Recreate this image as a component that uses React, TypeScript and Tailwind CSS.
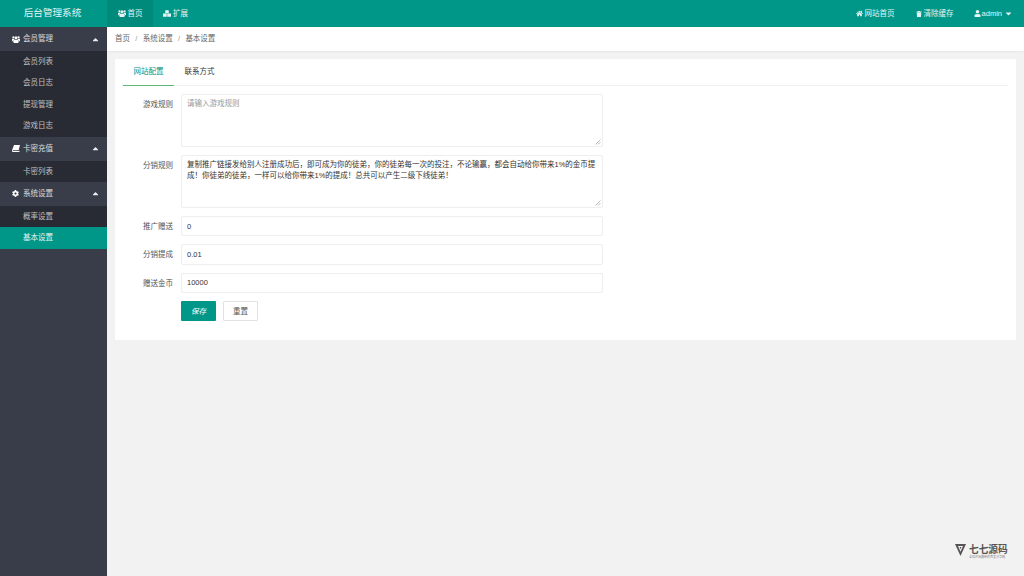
import { FaCaretDown, FaCaretUp, FaCog, FaHome, FaTrash, FaUser } from "react-icons/fa";
import type { ReactNode } from "react";

const FONT = "font-['Liberation_Sans','Noto_Sans_CJK_SC',sans-serif]";

// old font-awesome style glyphs, the v5 ones in react-icons are too different here
function UsersIcon() {
  return (
    <svg viewBox="0 0 16 14" className="h-[7px] w-[8px] fill-current">
      <circle cx="8" cy="3.6" r="3" />
      <circle cx="2.8" cy="2.6" r="2.2" />
      <circle cx="13.2" cy="2.6" r="2.2" />
      <path d="M0 5.5h3.5c.4 1.2 1 2 2 2.6H3c-1 .3-1.6 1-1.7 2.4H0zM16 5.5h-3.5c-.4 1.2-1 2-2 2.6H13c1 .3 1.6 1 1.7 2.4H16z" />
      <path d="M4 7.6h8c1.1.4 1.6 1.6 1.6 3.4 0 1.8-1.1 3-2.6 3H5c-1.5 0-2.6-1.2-2.6-3 0-1.8.5-3 1.6-3.4z" />
    </svg>
  );
}

function BlocksIcon() {
  return (
    <svg viewBox="0 0 16 13" className="h-[7px] w-[8px] fill-current">
      <path d="M4.5 0h7v6h-7z" />
      <path d="M0 6.5h7.5V13H0zM8.5 6.5H16V13H8.5z" />
    </svg>
  );
}

function BookIcon() {
  return (
    <svg viewBox="0 0 14 12" className="h-[7px] w-[8px] fill-current">
      <path d="M3.5 0H14l-2.4 9H1.8c-.5 0-.7.5-.5.8.1.3.4.5.8.5h10.6l.6-.9v1.2l-.6 1.4H2C.7 12 0 11 0 9.8c0-.4.1-.8.2-1.1z" />
    </svg>
  );
}

const menu = [
  { title: "会员管理", icon: <UsersIcon />, items: ["会员列表", "会员日志", "提现管理", "游戏日志"] },
  { title: "卡密充值", icon: <BookIcon />, items: ["卡密列表"] },
  { title: "系统设置", icon: <FaCog className="h-[7px] w-[7px]" />, items: ["概率设置", "基本设置"] },
];

const rules =
  "复制推广链接发给别人注册成功后，即可成为你的徒弟，你的徒弟每一次的投注，不论输赢，都会自动给你带来1%的金币提成！你徒弟的徒弟，一样可以给你带来1%的提成！总共可以产生二级下线徒弟！";

function NavLink({ icon, children }: { icon: ReactNode; children: ReactNode }) {
  return (
    <span className="flex items-center gap-[2px] text-[7.5px] text-white/90">
      {icon}
      {children}
    </span>
  );
}

function AreaRow({ label, value, placeholder }: { label: string; value?: string; placeholder?: string }) {
  return (
    <div className="flex">
      <label className="w-[58px] shrink-0 pt-[4px] pr-[8px] text-right text-[7.5px] leading-[14px] text-[#555]">{label}</label>
      <div className="relative h-[53px] w-[422px]">
        <textarea
          readOnly
          value={value}
          placeholder={placeholder}
          className="block h-full w-full resize-none rounded-[2px] border border-[#eeeeee] bg-white px-[5px] py-[3px] text-[7.5px] leading-[11px] text-[#333] outline-none placeholder:text-[#999]"
        />
        <svg width="6" height="6" viewBox="0 0 6 6" className="absolute bottom-[2px] right-[2px] stroke-[#aaa]">
          <path d="M0.5 5.5L5.5 0.5M3 5.5L5.5 3" fill="none" strokeWidth="0.8" />
        </svg>
      </div>
    </div>
  );
}

function TextRow({ label, value }: { label: string; value: string }) {
  return (
    <div className="flex items-center">
      <label className="w-[58px] shrink-0 pt-[1px] pr-[8px] text-right text-[7.5px] text-[#555]">{label}</label>
      <input
        readOnly
        value={value}
        className="h-[20.3px] w-[422px] rounded-[2px] border border-[#eeeeee] bg-white px-[5px] text-[7.5px] text-[#333] outline-none"
      />
    </div>
  );
}

export default function App() {
  return (
    <div className={`relative flex h-[576px] w-[1024px] flex-col overflow-hidden bg-[#f2f2f2] ${FONT}`}>
      <header className="flex h-[27px] shrink-0 items-stretch bg-[#009688]">
        <div className="flex w-[107px] items-center justify-center pr-[2px] text-[9.6px] text-white/90">后台管理系统</div>
        <div className="flex w-[46px] items-center justify-center bg-[#008a7c]">
          <NavLink icon={<UsersIcon />}>首页</NavLink>
        </div>
        <div className="flex w-[45px] items-center justify-center">
          <NavLink icon={<BlocksIcon />}>扩展</NavLink>
        </div>
        <div className="ml-auto flex items-center gap-[20px] pr-[11px]">
          <span className="mr-[1px]">
            <NavLink icon={<FaHome className="h-[7px] w-[7px]" />}>网站首页</NavLink>
          </span>
          <NavLink icon={<FaTrash className="h-[6px] w-[6px]" />}>清除缓存</NavLink>
          <span className="flex items-center gap-[1px] text-[7.5px] text-white/90">
            <FaUser className="h-[7px] w-[7px]" />
            admin
            <FaCaretDown className="ml-[1px] h-[9px] w-[9px]" />
          </span>
        </div>
      </header>

      <div className="flex min-h-0 flex-1">
        <aside className="w-[107px] shrink-0 bg-[#393d49] text-[7.5px]">
          {menu.map((group) => (
            <div key={group.title}>
              <div className="flex h-[24px] items-center pl-[11px] pr-[7px] text-white/80">
                <span className="flex w-[12px] justify-start pl-[0.5px] text-white">{group.icon}</span>
                <span>{group.title}</span>
                <FaCaretUp className="ml-auto h-[9px] w-[9px] text-white/90" />
              </div>
              <div className="bg-[#282b33]">
                {group.items.map((item) => (
                  <div
                    key={item}
                    className={`flex h-[21.4px] items-center pl-[23px] ${
                      item === "基本设置" ? "bg-[#009688] text-white/90" : "text-white/70"
                    }`}
                  >
                    {item}
                  </div>
                ))}
              </div>
            </div>
          ))}
        </aside>

        <main className="min-w-0 flex-1">
          <div className="flex h-[24px] items-center gap-[5.3px] bg-white pl-[8px] text-[7.5px] text-[#666] shadow-[0_1px_2px_rgba(0,0,0,0.05)]">
            <span>首页</span>
            <span className="text-[#999]">/</span>
            <span>系统设置</span>
            <span className="text-[#999]">/</span>
            <span>基本设置</span>
          </div>

          <section className="mx-[8px] mt-[8px] h-[281px] rounded-[1px] bg-white px-[8px]">
            <div className="flex h-[27px] border-b border-[#f0f0f0]">
              <span className="-mb-px flex w-[51px] items-center justify-center border-b border-[#5fb878] text-[7.5px] text-[#009688]">
                网站配置
              </span>
              <span className="flex w-[51px] items-center justify-center text-[7.5px] text-[#333]">联系方式</span>
            </div>

            <form className="mt-[8px] flex flex-col gap-[8px]">
              <AreaRow label="游戏规则" placeholder="请输入游戏规则" />
              <AreaRow label="分销规则" value={rules} />
              <TextRow label="推广赠送" value="0" />
              <TextRow label="分销提成" value="0.01" />
              <TextRow label="赠送金币" value="10000" />
              <div className="flex gap-[7px] pl-[58px]">
                <button type="button" className="h-[20.5px] w-[35px] rounded-[1px] bg-[#009688] text-[7.5px] italic text-white">
                  保存
                </button>
                <button type="button" className="h-[20.5px] w-[35px] rounded-[1px] border border-[#e2e2e2] bg-white text-[7.5px] text-[#555]">
                  重置
                </button>
              </div>
            </form>
          </section>
        </main>
      </div>

      <div className="absolute bottom-[18px] left-[955px] flex items-start gap-[3px] text-[#555]">
        <svg width="11" height="12" viewBox="0 0 11 12">
          <path d="M0 0H11L5.5 12Z" fill="#555" />
          <path d="M3 2H8L5.5 7.8Z" fill="#f2f2f2" />
          <path d="M4.6 3H6.4L5.5 5.2Z" fill="#555" />
        </svg>
        <div className="w-[39px]">
          <div className="whitespace-nowrap font-['Noto_Sans_CJK_SC',serif] text-[9.7px] font-bold leading-[10px]">七七源码</div>
          <div className="mt-[2px] whitespace-nowrap text-[3px] leading-[2px] text-[#888]">全球开源最新的首发分享网</div>
        </div>
      </div>
    </div>
  );
}
